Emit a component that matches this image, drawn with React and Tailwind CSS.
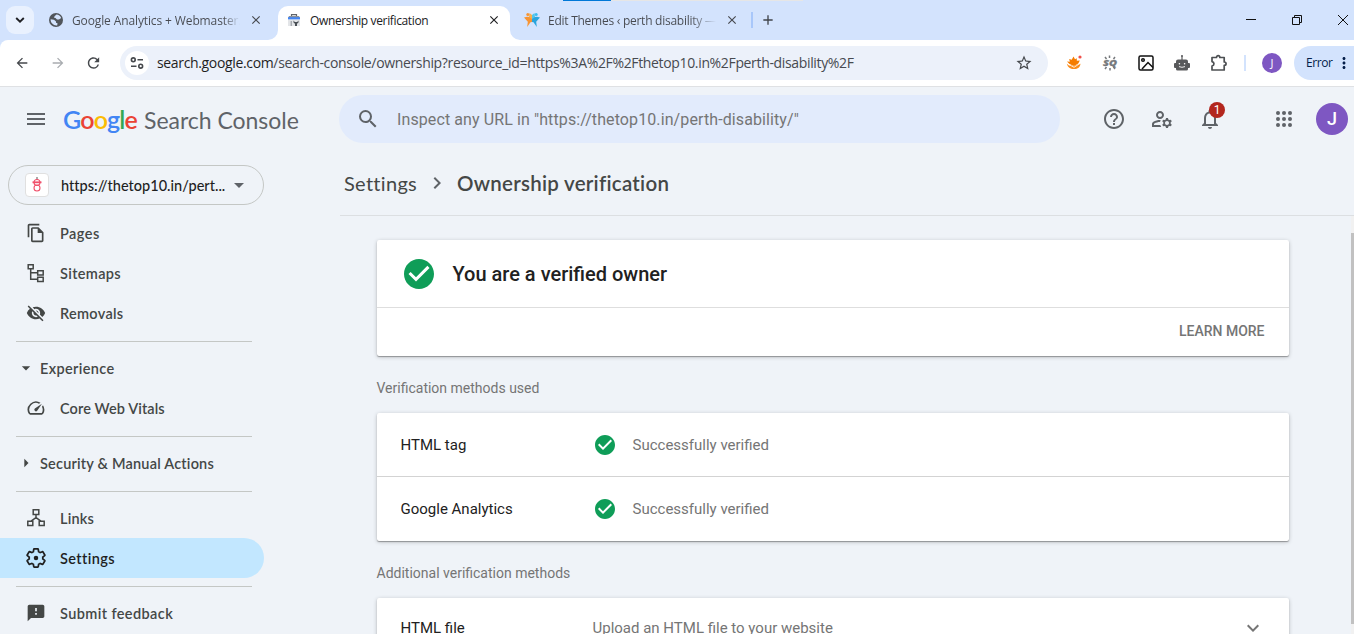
import React from "react";
import {
  MdArrowBack, MdArrowForward, MdRefresh, MdClose, MdAdd, MdExpandMore, MdStarBorder,
  MdMoreVert, MdMenu, MdSearch, MdHelpOutline, MdOutlineManageAccounts,
  MdNotificationsNone, MdArrowDropDown, MdArrowRight, MdOutlineFileCopy, MdVisibilityOff, MdOutlineSpeed,
  MdFeedback, MdCheckCircle, MdChevronRight,
} from "react-icons/md";

const UI = "font-['Open_Sans','Noto_Sans',sans-serif]";
const GS = "font-['Lato','Open_Sans',sans-serif]";
const RB = "font-['Roboto','Liberation_Sans',sans-serif]";

function Flare({ className, d }) {
  return (
    <svg viewBox="0 0 10 10" className={"absolute bottom-0 h-2.5 w-2.5 " + className}>
      <path d={d} fill="#fff" />
    </svg>
  );
}

function Globe() {
  return (
    <svg viewBox="0 0 14 14" className="h-3.5 w-3.5">
      <circle cx="7" cy="7" r="7" fill="#50555b" />
      <path d="M7.500 1.500c2 0 4 1.500 4.700 3.500L10 6.500H8L6.500 5 4.800 4.500l1-1.500zM1.600 6.300l3.400.5 2 1.700v1.200l1.500.6-.3 2.100C4.500 12.800 1.500 10 1.600 6.300z" fill="#d3e3fd" />
    </svg>
  );
}

function StarPeople() {
  return (
    <svg viewBox="0 0 16 16" className="h-4 w-4">
      <path d="M0 5.600 3 4.800 5.500 5 8 3.500V10l-1.500.3L3.200 15l.6-5.200z" fill="#f79433" />
      <path d="M16 5.600 13 4.800 10.500 5 8 3.500V10l1.500.3 3.300 4.700-.6-5.200z" fill="#2aa5dc" />
      <path d="M8 7V3l2.500-2L11 5z" fill="#53c4e8" />
      <path d="M8 7V3L5.500 1 5 5z" fill="#f9b04b" />
      <circle cx="3.800" cy="2.600" r="1.500" fill="#f79433" />
      <circle cx="12.200" cy="2.600" r="1.500" fill="#39bdf0" />
    </svg>
  );
}

function ConsoleIcon() {
  return (
    <svg viewBox="0 0 14 14" className="h-3.5 w-3.5">
      <path d="M4.500 3V1.600h5V3" fill="none" stroke="#5f6368" strokeWidth="1.200" />
      <path d="M2 3h10l1 2H1z" fill="#8a9097" />
      <rect x="1" y="4.200" width="12" height="2.400" fill="#4285f4" />
      <rect x="1" y="6.600" width="12" height="6.400" fill="#e3e5e8" />
      <rect x="3.600" y="8" width="1.300" height="5" fill="#a0a5ab" />
      <path d="M6.500 7.500v2l1.500 1.200V13h2v-2.300l1.500-1.200v-2l-1.300 1.600H7.800z" fill="#4a4f55" />
    </svg>
  );
}

function TabStrip() {
  return (
    <div className={"relative flex h-10 w-full items-center bg-[#d3e3fd] " + UI}>
      <div className="absolute left-[563px] top-0 flex h-px w-60">
        <div className="w-12 bg-[#0078d7]" />
        <div className="flex-1 bg-[#e6e6e6]" />
      </div>
      <div className="ml-1.5 flex h-7 w-7 items-center justify-center rounded-[9px] bg-[#e9f1fe]">
        <svg viewBox="0 0 10 6" className="h-[6px] w-[10px]"><path d="M1.200 1 5 4.600 8.800 1" fill="none" stroke="#202124" strokeWidth="1.900" /></svg>
      </div>
      <div className="ml-[15px] flex h-full w-[229px] items-center">
        <Globe />
        <span className="ml-[9px] w-[168px] whitespace-nowrap bg-gradient-to-r from-[#474a50] from-90% to-transparent bg-clip-text pt-0.5 text-xs tracking-[-0.12px] text-transparent">Google Analytics + Webmaster.</span>
        <MdClose className="ml-[9px] h-3.5 w-3.5 text-[#474a50]" />
      </div>
      <div className="relative mt-1.5 flex h-[34px] w-[232px] items-center self-start rounded-t-[10px] bg-white pb-1.5">
        <Flare className="-left-2.5" d="M10 0v10H0A10 10 0 0 0 10 0z" />
        <Flare className="-right-2.5" d="M0 0v10h10A10 10 0 0 1 0 0z" />
        <span className="ml-[9px]"><ConsoleIcon /></span>
        <span className="ml-[9px] w-[168px] whitespace-nowrap pt-0.5 text-xs tracking-[-0.36px] text-[#202124]">Ownership verification</span>
        <MdClose className="ml-[9px] h-3.5 w-3.5 text-[#202124]" />
      </div>
      <div className="ml-3.5 flex h-full items-center">
        <StarPeople />
        <span className="ml-2 w-[168px] whitespace-nowrap bg-gradient-to-r from-[#474a50] from-85% to-transparent bg-clip-text pt-0.5 text-xs tracking-[-0.26px] text-transparent">Edit Themes ‹ perth disability —</span>
        <MdClose className="ml-[9px] h-3.5 w-3.5 text-[#474a50]" />
        <div className="ml-3 h-4 w-0.5 bg-[#a8c7fa]" />
        <MdAdd className="ml-[7px] h-4 w-4 text-[#40444a]" />
      </div>
      <svg viewBox="0 0 108 12" className="ml-auto h-3 w-[108px]" fill="none" stroke="#111">
        <path d="M0 5.500h10" />
        <path d="M46.500 3.500h7v7h-7zM48.500 3.500v-2h7v7h-2" />
        <path d="M92 1l10 10M102 1 92 11" />
      </svg>
    </div>
  );
}

function Toolbar() {
  return (
    <div className="h-[47px] w-full bg-[#d3e3fd]">
      <div className={"flex h-full items-center rounded-tl-lg border-b border-[#dfe1e4] bg-white " + UI}>
        <MdArrowBack className="ml-[14px] h-4 w-4 text-[#45484c]" />
        <MdArrowForward className="ml-5 h-4 w-4 text-[#a9acb0]" />
        <MdRefresh className="ml-[19px] mr-px h-[18px] w-[17px] text-[#45484c]" />
        <div className="ml-[17px] flex h-[34px] w-[928px] items-center rounded-full bg-[#ecf1fa] pl-[5px]">
          <div className="flex h-6 w-6 items-center justify-center rounded-full bg-white">
            <svg viewBox="0 0 14 12" className="h-3 w-3.5" fill="none" stroke="#45484c" strokeWidth="1.600">
              <circle cx="3.300" cy="2.800" r="1.900" /><path d="M7.500 2.800h5.500M1 9.200h5.500" /><circle cx="10.700" cy="9.200" r="1.900" />
            </svg>
          </div>
          <span className="ml-2 flex-1 whitespace-nowrap text-sm tracking-[-0.345px] text-[#474a50]"><span className="text-[#1f1f1f]">search.google.com</span>/search-console/ownership?resource_id=https%3A%2F%2Fthetop10.in%2Fperth-disability%2F</span>
          <MdStarBorder className="mr-[15px] h-[18px] w-[18px] text-[#45484c]" />
        </div>
        <svg viewBox="0 0 16 16" className="ml-[18px] h-4 w-4">
          <path d="m7.500 1.500 1.500 2.800 1.800-1v2.500l3-.3-1.500 3L8 11 3.500 9 1 6.500l2.800.2-.6-2.700 2.500.8z" fill="#f57c00" />
          <path d="M.8 8.800 3 10.600 5.500 10l2 1.200 3-1.500 4-1C14 12 12 14 8 14S2 12.500.8 8.800z" fill="#fb8c1a" />
          <path d="m2.500 9.300 5.500 3 6-3.800" stroke="#fff" strokeWidth=".8" fill="none" /><circle cx="14" cy="2" r="1.600" fill="#f0504a" />
        </svg>
        <svg viewBox="0 0 16 16" className="ml-5 h-4 w-4 overflow-visible" stroke="#76797c">
          <path d="M7.500.500V3M8 13v2.500M3 2l1.500 2M13 2l-1.500 2M3 14l1.500-2M13 14l-1.500-2" strokeWidth="1.500" />
          <text x="1" y="11.300" fontSize="9.500" fontWeight="800" fontStyle="italic" fill="#76797c" strokeWidth=".3" textLength="14" lengthAdjust="spacingAndGlyphs">SQ</text>
        </svg>
        <svg viewBox="0 0 16 16" className="ml-5 h-4 w-4" fill="none" stroke="#111" strokeWidth="1.500">
          <rect x="1" y="1" width="14" height="14" rx="1.500" /><circle cx="5" cy="5" r="1.300" /><path d="m4 14 6-6.500 5 5" />
        </svg>
        <svg viewBox="0 0 16 16" className="ml-5 h-4 w-4">
          <path d="M8 .5V5" stroke="#58595b" strokeWidth="1.200" />
          <circle cx="8" cy="1" r=".9" fill="#58595b" />
          <path d="M2 6.500Q2 4.500 4 4.500h8q2 0 2 2V8h1q1 0 1 1v3q0 1-1 1h-1v1q0 1.500-1.500 1.500h-9Q2 15.500 2 14v-1H1q-1 0-1-1V9q0-1 1-1h1z" fill="#58595b" />
          <circle cx="5.400" cy="8.700" r=".8" fill="#fff" /><circle cx="10.600" cy="8.700" r=".8" fill="#fff" />
          <path d="M5 11.600q3 1.400 6 0" fill="none" stroke="#fff" strokeWidth=".9" />
        </svg>
        <svg viewBox="0 0 18 18" className="ml-5 h-[18px] w-[18px]" fill="none" stroke="#4d5053" strokeWidth="1.700">
          <path d="M2 3.500h4.500C6.500 1 9.800 1 9.800 3.500h4.400V8c2.500 0 2.500 3.300 0 3.300V16H2v-4c2.600-.6 2.600-3.800 0-4.400z" strokeLinejoin="round" />
        </svg>
        <div className="ml-4 h-4 w-0.5 bg-[#d3e3fd]" />
        <div className="ml-4 flex h-5 w-5 items-center justify-center rounded-full bg-[#7e57c2] text-[11px] text-white">J</div>
        <div className="ml-3 flex h-[34px] w-[60px] items-center rounded-l-full bg-[#d3e3fd] pl-[11px] text-xs text-[#041e49]">
          <span className="w-[27px] pl-px tracking-[-0.45px]">Error</span>
          <MdMoreVert className="ml-[3px] h-[18px] w-[18px] shrink-0" />
        </div>
      </div>
    </div>
  );
}

function Header() {
  return (
    <header className="flex h-16 w-full items-center text-[#5f6368]">
      <MdMenu className="ml-6 h-6 w-6" />
      <div className={"ml-[15px] flex h-8 w-[276px] items-center whitespace-nowrap pt-0.5 " + GS}>
        <span className="w-[81px] text-[25px] font-semibold tracking-[-0.85px]">
          <span className="text-[#4285f4]">G</span><span className="text-[#ea4335]">o</span><span className="text-[#fbbc05]">o</span><span className="text-[#4285f4]">g</span><span className="text-[#34a853]">l</span><span className="text-[#ea4335]">e</span>
        </span>
        <span className="text-[23px] tracking-[-0.03px]">Search Console</span>
      </div>
      <div className={"flex h-12 w-[721px] items-center rounded-full bg-[#e2ebfc] " + RB}>
        <MdSearch className="ml-[17px] h-6 w-6" />
        <span className="ml-[17px] pt-0.5 text-base tracking-[0.1px] text-[#757575]">Inspect any URL in "https://thetop10.in/perth-disability/"</span>
      </div>
      <MdHelpOutline className="ml-[42px] h-6 w-6" />
      <MdOutlineManageAccounts className="ml-6 h-6 w-6" />
      <div className="relative ml-6">
        <MdNotificationsNone className="h-6 w-6" />
        <div className={"absolute -top-[5px] left-[11px] flex h-4 w-4 items-center justify-center rounded-full bg-[#b3261e] text-xs text-white " + RB}>1</div>
      </div>
      <svg viewBox="0 0 16 16" className="ml-[54px] h-4 w-4" fill="currentColor">
        {[2, 8, 14].map((y) => [2, 8, 14].map((x) => <circle key={x + "-" + y} cx={x} cy={y} r="2" />))}
      </svg>
      <div className={"ml-6 flex h-8 w-8 items-center justify-center rounded-full bg-[#7e57c2] text-lg font-medium text-white " + RB}>J</div>
    </header>
  );
}

function Svg20({ children }) {
  return <svg viewBox="0 0 20 20" fill="none" stroke="currentColor" strokeWidth="1.500" className="h-5 w-5">{children}</svg>;
}
const SitemapIcon = () => (
  <Svg20><path d="M2.200 1.800h5v4h-5zM11.700 7.800h5.500v4.200h-5.500zM11.700 14.300h5.500v4.200h-5.500zM4.700 6v10.300h7M4.700 9.800h7" /></Svg20>
);
const LinksIcon = () => (
  <Svg20><path d="M7.200 1.800h5.600v4.700H7.200zM1.800 13.200h5v4.300h-5zM13.200 13.200h5v4.300h-5zM10 6.500v3.200l-5 3.500M10 9.700l5 3.500" /></Svg20>
);
const GearIcon = () => (
  <svg viewBox="1 1 22 22" className="h-5 w-5">
    <path d="M19.430 12.980c.04-.32.07-.64.07-.98 0-.34-.03-.66-.07-.98l2.110-1.650c.19-.15.24-.42.12-.64l-2-3.460a.5.5 0 0 0-.61-.22l-2.490 1c-.52-.4-1.080-.73-1.690-.98l-.38-2.650A.488.488 0 0 0 14 2h-4c-.25 0-.46.18-.49.42l-.38 2.650c-.61.25-1.170.59-1.690.98l-2.490-1a.566.566 0 0 0-.18-.03c-.17 0-.34.09-.43.25l-2 3.460c-.13.22-.07.49.12.64l2.110 1.650c-.04.32-.07.65-.07.98 0 .33.03.66.07.98l-2.110 1.650c-.19.15-.24.42-.12.64l2 3.460a.5.5 0 0 0 .61.22l2.490-1c.52.4 1.080.73 1.690.98l.38 2.650c.03.24.24.42.49.42h4c.25 0 .46-.18.49-.42l.38-2.650c.61-.25 1.170-.59 1.690-.98l2.490 1c.06.02.12.03.18.03.17 0 .34-.09.43-.25l2-3.460c.12-.22.07-.49-.12-.64z" fill="none" stroke="currentColor" strokeWidth="1.900" />
    <circle cx="12" cy="12" r="2.500" fill="currentColor" />
  </svg>
);

function NavItem({ icon, label, active, spacing }) {
  return (
    <div className={"flex h-10 w-[264px] items-center rounded-r-full pl-[26px] " + (active ? "bg-[#c2e7ff] text-[#1f1f1f]" : "text-[#444746]")}>
      <span className="flex h-5 w-5 items-center justify-center">{icon}</span>
      <span className={"ml-3.5 whitespace-nowrap pt-px text-[14.5px] font-semibold " + spacing}>{label}</span>
    </div>
  );
}
function NavGroup({ icon, label, spacing }) {
  return (
    <div className="flex h-10 items-center pl-4 text-[#444746]">
      {icon}
      <span className={"ml-1 pt-px text-[14.5px] font-semibold " + spacing}>{label}</span>
    </div>
  );
}
const Rule = () => <div className="mb-1.5 ml-4 mt-2 h-px w-[236px] bg-[#c4c7c5]" />;

function Sidebar() {
  return (
    <nav className={"w-[340px] shrink-0 pt-3.5 " + GS}>
      <div className="ml-2 flex h-10 w-64 items-center rounded-full border border-[#c4c7c5] pl-4">
        <div className="flex h-6 w-6 items-center justify-center rounded-sm border border-[#e0e0e0] bg-white">
          <svg viewBox="0 0 12 16" className="h-4 w-3" fill="none" stroke="#f0516c" strokeWidth="1.100">
            <path d="M6 0v3" stroke="#666" /><path d="M1.500 5.300h9" strokeWidth="1.800" /><circle cx="6" cy="5.500" r="3" /><circle cx="6" cy="11" r="3" />
          </svg>
        </div>
        <span className="ml-3 w-[167px] whitespace-nowrap pt-px text-[14.5px] font-medium tracking-[0.02px] text-[#1f1f1f]">https://thetop10.in/pert...</span>
        <svg viewBox="0 0 10 5" className="ml-[6px] h-[5px] w-2.5"><path d="M0 0h10L5 5z" fill="#5f6368" /></svg>
      </div>
      <div className="pt-2">
        <NavItem icon={<MdOutlineFileCopy className="h-5 w-5" />} label="Pages" spacing="tracking-[0.45px]" />
        <NavItem icon={<SitemapIcon />} label="Sitemaps" spacing="tracking-[0.35px]" />
        <NavItem icon={<MdVisibilityOff className="h-5 w-5" />} label="Removals" spacing="tracking-[0.3px]" />
        <Rule />
        <NavGroup icon={<MdArrowDropDown className="h-5 w-5" />} label="Experience" spacing="tracking-[0.35px]" />
        <NavItem icon={<MdOutlineSpeed className="h-5 w-5" />} label="Core Web Vitals" spacing="tracking-[0.1px]" />
        <Rule />
        <NavGroup icon={<MdArrowRight className="h-5 w-5" />} label="Security & Manual Actions" spacing="tracking-[0.2px]" />
        <Rule />
        <NavItem icon={<LinksIcon />} label="Links" spacing="tracking-[0.2px]" />
        <NavItem icon={<GearIcon />} label="Settings" active spacing="tracking-[0.4px]" />
        <Rule />
        <NavItem icon={<MdFeedback className="h-5 w-5" />} label="Submit feedback" spacing="tracking-[0.4px]" />
      </div>
    </nav>
  );
}

const CARD = "rounded-[2px] bg-white shadow-[0_1px_1px_rgba(0,0,0,0.3),0_1px_4px_rgba(0,0,0,0.22)]";

function Method({ name, first }) {
  return (
    <div className={"flex h-16 items-center pl-[23.5px] " + (first ? "border-b border-[#d3d3d3]" : "")}>
      <span className={"w-[192px] text-[15px] text-[#212121] " + (first ? "pt-0.5" : "")}>{name}</span>
      <MdCheckCircle className="h-6 w-6 text-[#0f9d58]" />
      <span className={"ml-4 text-[15px] text-[#757575] " + (first ? "pt-0.5" : "")}>Successfully verified</span>
    </div>
  );
}

function Main() {
  return (
    <main className="flex min-w-0 flex-1 flex-col">
      <div className={"flex h-[65px] items-center border-b border-[#dcdfe2] pl-1 text-[#444746] " + GS}>
        <span className="w-[74px] text-xl tracking-[0.3px]">Settings</span>
        <MdChevronRight className="ml-[7px] h-6 w-6 text-[#5f6368]" />
        <span className="ml-2 whitespace-nowrap text-[20.5px] font-semibold tracking-[0.26px]">Ownership verification</span>
      </div>
      <div className={"flex h-[418px] overflow-hidden " + RB}>
        <div className="w-[1009px] pl-[37px] pr-[60px] pt-6">
          <section className={CARD}>
            <div className="flex h-[68px] items-center border-b border-[#dedede] pl-[23.5px]">
              <MdCheckCircle className="h-9 w-9 text-[#0f9d58]" />
              <span className="ml-4 text-xl font-medium text-[#212121]">You are a verified owner</span>
            </div>
            <div className="flex h-12 items-center justify-end pb-0.5 pr-[24.5px] text-sm font-medium text-[#757575]">LEARN MORE</div>
          </section>
          <h2 className="-ml-[0.5px] flex h-[57px] items-center pt-[7px] text-sm text-[#757575]">Verification methods used</h2>
          <section className={CARD}>
            <Method name="HTML tag" first />
            <Method name="Google Analytics" />
          </section>
          <h2 className="-ml-[0.5px] flex h-[57px] items-center pt-[7px] text-sm text-[#757575]">Additional verification methods</h2>
          <section className={CARD + " flex h-[60px] items-center pl-[23.5px] text-[15px]"}>
            <span className="w-[192px] text-[#212121]">HTML file</span>
            <span className="flex-1 text-[#757575]">Upload an HTML file to your website</span>
            <MdExpandMore className="mr-6 h-6 w-6 text-[#757575]" />
          </section>
        </div>
        <div className="ml-0.5 flex-1 bg-[#f1f1f1] pt-[17px]"><div className="h-[391px] bg-[#c1c1c1]" /></div>
      </div>
    </main>
  );
}

export default function App() {
  return (
    <div className="h-[634px] w-[1354px] overflow-hidden bg-[#eff3f8]">
      <TabStrip />
      <Toolbar />
      <Header />
      <div className="flex">
        <Sidebar />
        <Main />
      </div>
    </div>
  );
}
